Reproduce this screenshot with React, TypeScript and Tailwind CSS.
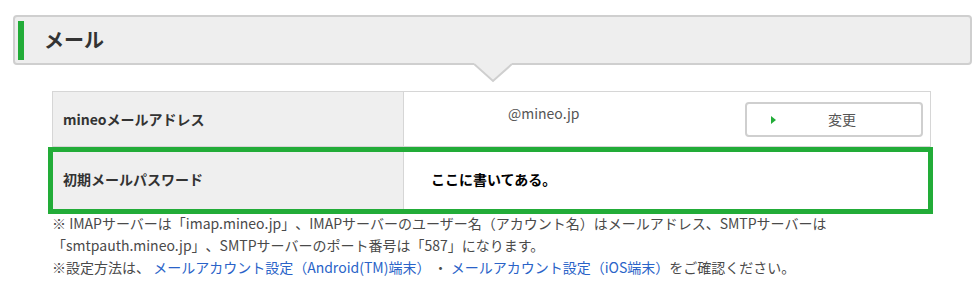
import React from "react";

const FONT = "font-['Noto_Sans_CJK_JP','Noto_Sans',sans-serif]";

function SectionHeader({ title }: { title: string }) {
  return (
    <div className="relative ml-[13px] flex h-[50px] w-[959px] items-center rounded-[4px] border-2 border-[#cfcfcf] bg-[#eeeeee]">
      <div className="ml-[3px] h-[39px] w-[6px] bg-[#22ac38]" />
      <h2 className="ml-[20px] text-[20px] font-bold leading-[24px] text-[#333]">{title}</h2>
      {/* arrow under the header */}
      <svg
        className="absolute left-1/2 top-[44px] -translate-x-1/2"
        width="38"
        height="22"
        viewBox="0 0 38 22"
      >
        <polygon points="0,0 38,0 38,3 19,20 0,3" fill="#eeeeee" />
        <polyline points="0,3 19,20 38,3" fill="none" stroke="#cfcfcf" strokeWidth="2" />
      </svg>
    </div>
  );
}

export default function App() {
  return (
    <div className={`h-[297px] w-[975px] bg-white pt-[15px] [text-spacing-trim:space-all] ${FONT}`}>
      <SectionHeader title="メール" />

      <div className="ml-[52px] mt-[26px] w-[879px] border-x border-t border-[#d6d6d6]">
        {/* row 1 */}
        <div className="flex h-[55px] border-b border-[#d6d6d6]">
          <div className="flex w-[351px] items-center border-r border-[#d6d6d6] bg-[#efefef] pl-[10px] text-[14px] font-bold text-[#333]">
            mineoメールアドレス
          </div>
          <div className="flex flex-1 items-start">
            <span className="ml-[104px] mt-[11px] text-[14px] leading-[20px] text-[#555]">@mineo.jp</span>
            <button className="ml-auto mr-[7px] mt-[10px] flex h-[35px] w-[178px] items-center rounded-[4px] border-2 border-[#cfcfcf] bg-white pl-[24px] text-[14px] text-[#555]">
              <span className="h-0 w-0 border-y-[4px] border-l-[5px] border-y-transparent border-l-[#22ac38]" />
              <span className="ml-[52px]">変更</span>
            </button>
          </div>
        </div>

        {/* row 2 */}
        <div className="relative flex h-[65px] border-b border-[#d6d6d6]">
          <div className="flex w-[351px] items-center border-r border-[#d6d6d6] bg-[#efefef] pl-[10px] text-[14px] font-bold text-[#333]">
            初期メールパスワード
          </div>
          <div className="flex flex-1 items-center">
            <span className="ml-[27px] text-[14px] font-bold text-black">ここに書いてある。</span>
          </div>
          <div className="pointer-events-none absolute -bottom-[3px] -left-[5px] -right-[3px] top-0 border-[5px] border-[#22ac38]" />
        </div>
      </div>

      <p className="ml-[52px] mt-0 text-[14px] leading-[22px] text-[#4a4a4a]">
        ※ IMAPサーバーは「imap.mineo.jp」、IMAPサーバーのユーザー名（アカウント名）はメールアドレス、SMTPサーバーは
        <br />
        「smtpauth.mineo.jp」、SMTPサーバーのポート番号は「587」になります。
        <br />
        ※設定方法は、 <a className="text-[#2a63c8]">メールアカウント設定（Android(TM)端末）</a> ・{" "}
        <a className="text-[#2a63c8]">メールアカウント設定（iOS端末）</a>をご確認ください。
      </p>
    </div>
  );
}
